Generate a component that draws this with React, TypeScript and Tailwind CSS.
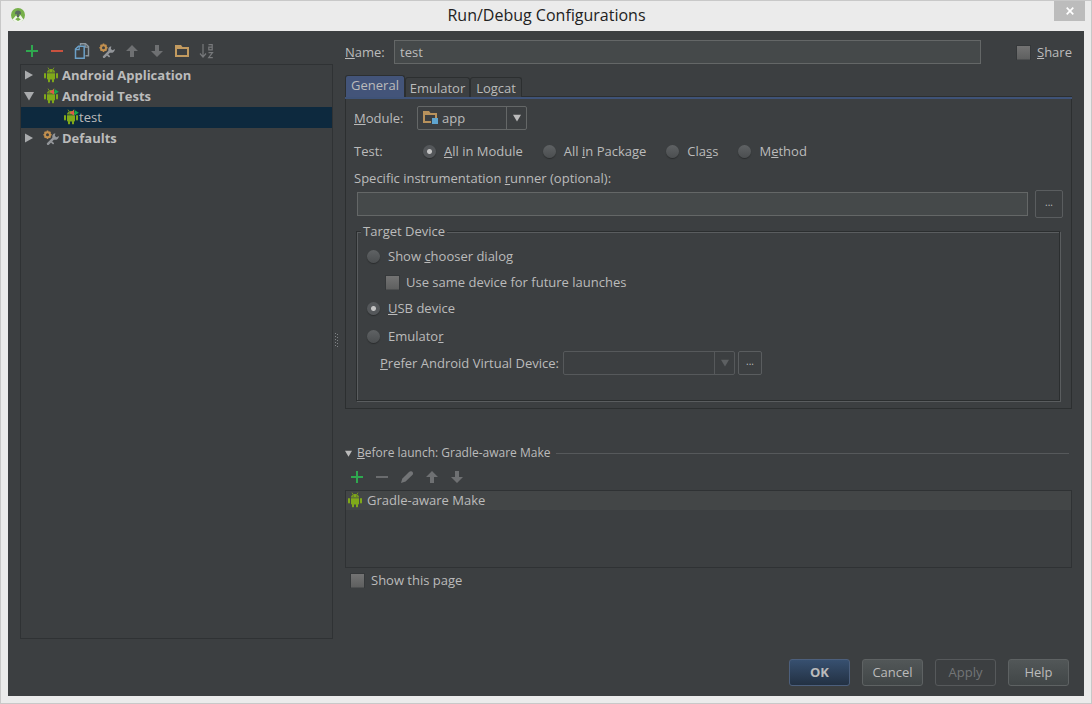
import { useState, type ReactNode } from "react";

type IconProps = { className?: string };

function AndroidIcon({ variant = "plain" }: { variant?: "plain" | "test" }) {
  return (
    <svg width="16" height="16" viewBox="0 0 16 16" className="shrink-0" aria-hidden="true">
      <g fill="#80a91a">
        <path d="M4 5.500c0-4.800 8-4.800 8 0z" />
        <path d="M5 .6l1 1.800M11 .6l-1 1.800" stroke="#80a91a" strokeWidth="0.8" />
        <path d="M4 6.200h8v5.500a.8.8 0 0 1-.8.8H4.800a.8.800 0 0 1-.8-.8z" />
        <rect x="1" y="6" width="2" height="5.500" rx="1" />
        <rect x="13" y="6" width="2" height="5.500" rx="1" />
        <rect x="5" y="11.500" width="2" height="3.800" rx="0.9" />
        <rect x="9" y="11.500" width="2" height="3.800" rx="0.9" />
      </g>
      <circle cx="6.200" cy="4" r="0.6" fill="#3c3f41" />
      <circle cx="9.800" cy="4" r="0.6" fill="#3c3f41" />
      {variant === "test" && (
        <>
          <path d="M11 1v5.500L6.500 3.700z" fill="#e05a48" />
          <path d="M11.500 1v5.500L15.800 3.700z" fill="#16a94c" />
        </>
      )}
    </svg>
  );
}

function WrenchIcon() {
  return (
    <svg width="16" height="16" viewBox="0 0 16 16" className="shrink-0" fill="none" aria-hidden="true">
      <path d="M5 13.800L10.500 8.300" stroke="#93969a" strokeWidth="2.400" strokeLinecap="round" />
      <path d="M12.300 3.200c-2.300.4-3.500 2.200-2.900 4.200.7 2.200 3.100 2.900 4.900 1.800 1.100-.7 1.600-1.900 1.500-3.200l-2.200 1.300-1.700-1.400z" fill="#93969a" />
      <path d="M8.500 11.800l1.600 1.500" stroke="#93969a" strokeWidth="1.800" strokeLinecap="round" />
      <circle cx="4.500" cy="4.700" r="2.500" stroke="#c2904f" strokeWidth="2" />
      <path d="M4.500.6v1.500M4.500 7.400v1.500M.4 4.700h1.500M7.100 4.700h1.500M1.600 1.800l1 1M6.400 6.600l1 1M7.400 1.800l-1 1M1.600 7.600l1-1" stroke="#c2904f" strokeWidth="1.600" />
    </svg>
  );
}

function PlusIcon() {
  return (
    <svg width="16" height="16" viewBox="0 0 16 16" aria-hidden="true">
      <path d="M7 2h2v5h5v2H9v5H7V9H2V7h5z" fill="#2fa84f" />
    </svg>
  );
}

function MinusIcon({ className }: IconProps) {
  return (
    <svg width="16" height="16" viewBox="0 0 16 16" className={className} aria-hidden="true">
      <path d="M2 7h12v2H2z" fill="currentColor" />
    </svg>
  );
}

function ArrowIcon({ className }: IconProps) {
  return (
    <svg width="16" height="16" viewBox="0 0 16 16" className={className} aria-hidden="true">
      <path d="M8 2l6 6h-4v6H6V8H2z" fill="#6e7072" />
    </svg>
  );
}

function CopyIcon() {
  return (
    <svg width="16" height="16" viewBox="0 0 16 16" fill="none" aria-hidden="true">
      <path d="M6.500 2.500V.8h5L14.500 3.600v9.200H11.500" stroke="#8d979e" strokeWidth="1.400" />
      <path d="M11.200 1v3.200h3" stroke="#8d979e" strokeWidth="1.200" />
      <path d="M1.500 6L4.500 3.200h5.700v12H1.500z" stroke="#6ba0c8" strokeWidth="1.500" />
      <path d="M5.200 3.400v3.200H1.800" stroke="#6ba0c8" strokeWidth="1.200" />
    </svg>
  );
}

function FolderIcon() {
  return (
    <svg width="16" height="16" viewBox="0 0 16 16" aria-hidden="true">
      <path d="M1 2h6l1.500 2H15v10H1zM3 6v6h10V6z" fill="#c29a5f" fillRule="evenodd" />
    </svg>
  );
}

function ModuleIcon({ className }: IconProps) {
  return (
    <svg width="16" height="16" viewBox="0 0 16 16" className={className} aria-hidden="true">
      <path d="M1 1h6l1.500 2H15v5h-2V5H3v6h6v2H1z" fill="#b8925c" fillRule="evenodd" />
      <rect x="10" y="8" width="6" height="6" fill="#5fa5cf" />
    </svg>
  );
}

function SortIcon() {
  return (
    <svg width="16" height="16" viewBox="0 0 16 16" fill="none" stroke="#77797b" aria-hidden="true">
      <path d="M4 1v13M1 10.500l3 3.500 3-3.500" strokeWidth="1.200" />
      <path d="M9.500 1.700h3.700v5.100H9.800V4.200h3.400M9.500 9.600h4l-3.800 5h4.100" strokeWidth="1.200" />
    </svg>
  );
}

function PencilIcon() {
  return (
    <svg width="16" height="16" viewBox="0 0 16 16" fill="#737577" aria-hidden="true">
      <path d="M2 14l1.200-4.200L10 3c2-1.800 5.200.2 3.600 2.800L6.600 12.600z" />
    </svg>
  );
}

function StudioIcon() {
  return (
    <svg width="16" height="16" viewBox="0 0 16 16" className="shrink-0" aria-hidden="true">
      <circle cx="8" cy="8" r="7" fill="#77b04a" />
      <path d="M2.500 12.500L6 8.500l2 2.500 2.500-3 3 4.500A7 7 0 0 1 2.500 12.500z" fill="#f1f5ec" />
      <path d="M5.200 12.200l2.800-2 2.800 2.300-2.800 1.500z" fill="#77b04a" />
      <path d="M5 6.500a3 3 0 0 1 6 0v.8H9V10H7V7.300H5z" fill="#5a6b60" />
    </svg>
  );
}

function TriangleIcon({ className, open = false }: IconProps & { open?: boolean }) {
  return (
    <svg width="10" height="10" viewBox="0 0 10 10" className={className} fill="currentColor" aria-hidden="true">
      {open ? <path d="M0 1h10L5 9.500z" /> : <path d="M1 .5v9L9 5z" />}
    </svg>
  );
}

function ToolButton({ label, disabled, children }: { label: string; disabled?: boolean; children: ReactNode }) {
  return (
    <button type="button" aria-label={label} disabled={disabled} className="flex h-5 w-[25px] items-center pl-1">
      {children}
    </button>
  );
}

const boxClass =
  "size-[13px] shrink-0 appearance-none bg-linear-to-b from-[#737373] to-[#5f6060] shadow-[0_1px_0_#4d4f50,0_0_0_1px_#35383a] checked:from-[#9a9a9a]";
const radioClass =
  "size-[13px] shrink-0 appearance-none rounded-full bg-linear-to-b from-[#5f6264] to-[#4b4e50] shadow-[0_1px_1px_#2a2c2d] checked:bg-[radial-gradient(circle,#c4c4c4_0_2px,#54575a_3px)]";
const fieldClass = "min-w-0 border border-[#646767] bg-[#45494a] px-[5px] text-[#bbbbbb] outline-none";
const pushClass = "h-[27px] w-[61px] rounded-[3px] border pb-[2px]";

function Check({ id, children }: { id: string; children: ReactNode }) {
  return (
    <label htmlFor={id} className="flex items-center gap-[7px]">
      <input id={id} type="checkbox" className={boxClass} />
      <span>{children}</span>
    </label>
  );
}

function Radio({ id, name, checked, onSelect, children }: { id: string; name: string; checked: boolean; onSelect: () => void; children: ReactNode }) {
  return (
    <label htmlFor={id} className="flex items-center gap-2">
      <input id={id} type="radio" name={name} checked={checked} onChange={onSelect} className={radioClass} />
      <span>{children}</span>
    </label>
  );
}

function ConfigTree() {
  return (
    <section className="flex w-[313px] shrink-0 flex-col">
      <div className="flex h-[33px] items-end pb-[3px]">
        <ToolButton label="Add"><PlusIcon /></ToolButton>
        <ToolButton label="Remove"><MinusIcon className="text-[#c9523f]" /></ToolButton>
        <ToolButton label="Copy"><CopyIcon /></ToolButton>
        <ToolButton label="Edit defaults"><WrenchIcon /></ToolButton>
        <ToolButton label="Move up" disabled><ArrowIcon /></ToolButton>
        <ToolButton label="Move down" disabled><ArrowIcon className="rotate-180" /></ToolButton>
        <ToolButton label="Create folder"><FolderIcon /></ToolButton>
        <ToolButton label="Sort" disabled><SortIcon /></ToolButton>
      </div>
      <ul role="tree" className="flex-1 border border-[#2f3234] font-bold">
        <li role="treeitem" className="flex h-[21px] items-center pb-[2px] pl-[3px]">
          <TriangleIcon className="mr-[9px] text-[#a9abad]" />
          <AndroidIcon />
          <span className="ml-[3px]">Android Application</span>
        </li>
        <li role="treeitem" aria-expanded="true" className="flex h-[21px] items-center pb-[2px] pl-[3px]">
          <TriangleIcon open className="mr-[9px] text-[#a9abad]" />
          <AndroidIcon variant="test" />
          <span className="ml-[3px]">Android Tests</span>
        </li>
        <li role="treeitem" aria-selected="true" className="flex h-[21px] items-center bg-[#0d293e] pb-[2px] pl-[42px] font-normal">
          <AndroidIcon variant="test" />
          <span>test</span>
        </li>
        <li role="treeitem" className="flex h-[21px] items-center pb-[2px] pl-[3px]">
          <TriangleIcon className="mr-[9px] text-[#a9abad]" />
          <WrenchIcon />
          <span className="ml-[3px]">Defaults</span>
        </li>
      </ul>
    </section>
  );
}

function TargetDevice() {
  const [target, setTarget] = useState("usb");
  return (
    <fieldset className="mr-[11px] ml-[10px] h-[179px] border border-[#2b2e2f] shadow-[inset_1px_1px_0_#5a5d5f,1px_1px_0_#5a5d5f]">
      <legend className="ml-1 bg-[#3c3f41] px-[2px] leading-[18px]">Target Device</legend>
      <div className="flex flex-col pl-[10px]">
        <div className="flex h-8 items-center">
          <Radio id="chooser" name="target" checked={target === "chooser"} onSelect={() => setTarget("chooser")}>
            Show <u>c</u>hooser dialog
          </Radio>
        </div>
        <div className="flex h-5 items-center pl-[19px]">
          <Check id="same-device">Use same device for future launches</Check>
        </div>
        <div className="flex h-8 items-center">
          <Radio id="usb" name="target" checked={target === "usb"} onSelect={() => setTarget("usb")}>
            <u>U</u>SB device
          </Radio>
        </div>
        <div className="flex h-6 items-center">
          <Radio id="emulator" name="target" checked={target === "emulator"} onSelect={() => setTarget("emulator")}>
            Emulato<u>r</u>
          </Radio>
        </div>
        <div className="mt-[3px] flex h-6 items-center pl-[13px]">
          <label htmlFor="avd" className="w-[183px]"><u>P</u>refer Android Virtual Device:</label>
          <div className="relative flex">
            <select id="avd" disabled className="h-6 w-[172px] appearance-none rounded-[2px] border border-[#56595b]" />
            <span className="pointer-events-none absolute inset-y-0 right-0 flex w-[21px] items-center justify-center border-l border-[#56595b] text-[#5d6062]">
              <TriangleIcon open className="size-2" />
            </span>
          </div>
          <button type="button" aria-label="Choose virtual device" className="ml-[3px] flex h-6 w-6 items-center justify-center rounded-[2px] border border-[#5a5d5f] pb-1 text-[10px] leading-none">
            ...
          </button>
        </div>
      </div>
    </fieldset>
  );
}

function GeneralPanel() {
  const [scope, setScope] = useState("module");
  return (
    <div className="border border-t-0 border-[#2c2f30] pt-[7px] pb-[7px]">
      <div className="flex h-6 items-center pl-2">
        <label htmlFor="module" className="w-[63px]"><u>M</u>odule:</label>
        <div className="relative flex">
          <select id="module" className="h-6 w-[110px] appearance-none rounded-[2px] border border-[#646767] pl-6 outline-none">
            <option>app</option>
          </select>
          <ModuleIcon className="pointer-events-none absolute top-1 left-[5px]" />
          <span className="pointer-events-none absolute inset-y-0 right-0 flex w-[21px] items-center justify-center border-l border-[#646767]">
            <TriangleIcon open className="size-2" />
          </span>
        </div>
      </div>
      <div className="mt-[11px] flex h-5 items-center pl-2">
        <span className="w-[69px]">Test:</span>
        <div className="flex gap-5">
          <Radio id="in-module" name="scope" checked={scope === "module"} onSelect={() => setScope("module")}>
            <u>A</u>ll in Module
          </Radio>
          <Radio id="in-package" name="scope" checked={scope === "package"} onSelect={() => setScope("package")}>
            All <u>i</u>n Package
          </Radio>
          <Radio id="class" name="scope" checked={scope === "class"} onSelect={() => setScope("class")}>
            Cla<u>s</u>s
          </Radio>
          <Radio id="method" name="scope" checked={scope === "method"} onSelect={() => setScope("method")}>
            M<u>e</u>thod
          </Radio>
        </div>
      </div>
      <label htmlFor="runner" className="mt-[7px] block pl-2 leading-5">
        Specific instrumentation <u>r</u>unner (optional):
      </label>
      <div className="mt-[2px] mb-1 flex items-center gap-[7px] pr-2 pl-[11px]">
        <input id="runner" type="text" className={`${fieldClass} h-6 flex-1`} />
        <button type="button" aria-label="Choose runner" className="flex size-7 items-center justify-center rounded-[2px] border border-[#5a5d5f] pb-1 text-[10px] leading-none">
          ...
        </button>
      </div>
      <TargetDevice />
    </div>
  );
}

function Tabs() {
  return (
    <div role="tablist" className="mt-[11px] flex items-end border-b-2 border-[#3f5378]">
      <button type="button" role="tab" aria-selected="true" className="h-[22px] w-[60px] rounded-t-[3px] border-x border-t border-[#2c2f30] bg-[#435479] pb-1">
        General
      </button>
      <button type="button" role="tab" className="h-5 w-[65px] rounded-t-[3px] border-x border-t border-[#2c2f30]">
        Emulator
      </button>
      <button type="button" role="tab" className="h-5 w-[52px] rounded-t-[3px] border-x border-t border-[#2c2f30]">
        Logcat
      </button>
      <div className="h-px flex-1 bg-[#2c2f30]" />
    </div>
  );
}

function BeforeLaunch() {
  return (
    <section>
      <div className="mt-[34px] flex h-5 items-center text-[12px]">
        <TriangleIcon open className="size-[7px]" />
        <h2 className="ml-[5px]"><u>B</u>efore launch: Gradle-aware Make</h2>
        <div className="mr-[3px] ml-[6px] h-px flex-1 bg-[#56595b]" />
      </div>
      <div className="flex h-[27px] items-center">
        <ToolButton label="Add task"><PlusIcon /></ToolButton>
        <ToolButton label="Remove task" disabled><MinusIcon className="text-[#6a6c6e]" /></ToolButton>
        <ToolButton label="Edit task" disabled><PencilIcon /></ToolButton>
        <ToolButton label="Move task up" disabled><ArrowIcon /></ToolButton>
        <ToolButton label="Move task down" disabled><ArrowIcon className="rotate-180" /></ToolButton>
      </div>
      <ul className="h-[78px] border border-[#2f3234]">
        <li className="flex h-[19px] items-center gap-1 bg-[#434647] pb-[1px] pl-[1px]">
          <AndroidIcon />
          <span>Gradle-aware Make</span>
        </li>
      </ul>
      <div className="mt-[2px] flex h-5 items-center pl-[6px]">
        <Check id="show-page">Show this page</Check>
      </div>
    </section>
  );
}

export default function App() {
  return (
    <div className="flex min-h-screen flex-col border border-[#c8c8c8] bg-[#ebebeb] px-[7px] pb-[7px] font-['Open_Sans','Noto_Sans',sans-serif] text-[13px] leading-[18px] text-[#bbbbbb]">
      <header className="relative flex h-[30px] items-center pb-[2px] pl-[2px]">
        <StudioIcon />
        <h1 className="mr-[17px] flex-1 text-center text-[16px] text-[#222222]">Run/Debug Configurations</h1>
        <button type="button" aria-label="Close" className="absolute top-0 -right-px flex h-5 w-[31px] items-center justify-center bg-[#bcbcbc]">
          <svg width="8" height="8" viewBox="0 0 8 8" aria-hidden="true">
            <path d="M.7.7l6.600 6.600M7.300.7L.7 7.300" stroke="#ffffff" strokeWidth="1.700" />
          </svg>
        </button>
      </header>
      <main className="flex flex-1 flex-col bg-[#3c3f41] px-3">
        <div className="flex flex-1">
          <ConfigTree />
          <div className="flex w-3 shrink-0 items-center justify-center pt-[9px] pr-1">
            <svg width="4" height="14" viewBox="0 0 4 14" fill="#808386" aria-hidden="true">
              <path d="M0 0h1v1H0zM2 1h1v1H2zM0 3h1v1H0zM2 4h1v1H2zM0 6h1v1H0zM2 7h1v1H2zM0 9h1v1H0zM2 10h1v1H2zM0 12h1v1H0zM2 13h1v1H2z" />
            </svg>
          </div>
          <section className="min-w-0 flex-1 pt-[9px]">
            <div className="flex h-6 items-center">
              <label htmlFor="name" className="w-[49px]"><u>N</u>ame:</label>
              <input id="name" type="text" defaultValue="test" className={`${fieldClass} h-6 flex-1`} />
              <div className="ml-9 w-[55px]">
                <Check id="share"><u>S</u>hare</Check>
              </div>
            </div>
            <Tabs />
            <GeneralPanel />
            <BeforeLaunch />
          </section>
        </div>
        <footer className="flex justify-end gap-3 pt-5 pr-[3px] pb-[10px]">
          <button type="button" className={`${pushClass} border-[#4c5f7c] bg-linear-to-b from-[#375070] to-[#233143] font-bold`}>OK</button>
          <button type="button" className={`${pushClass} border-[#5e6263] bg-linear-to-b from-[#525758] to-[#414647]`}>Cancel</button>
          <button type="button" disabled className={`${pushClass} border-[#56595b] text-[#737577]`}>Apply</button>
          <button type="button" className={`${pushClass} border-[#5e6263] bg-linear-to-b from-[#525758] to-[#414647]`}>Help</button>
        </footer>
      </main>
    </div>
  );
}
